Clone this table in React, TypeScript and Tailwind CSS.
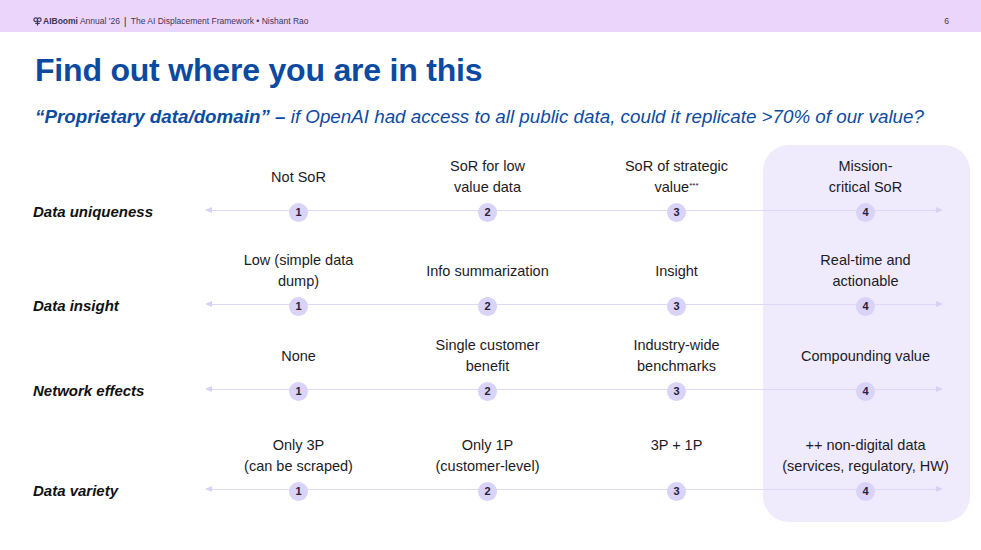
import React from "react";

type Row = {
  label: string;
  items: { text: React.ReactNode; top?: boolean }[];
  mt: string;
};

const rows: Row[] = [
  {
    label: "Data uniqueness",
    mt: "mt-[27px]",
    items: [
      { text: "Not SoR" },
      { text: <>SoR for low<br />value data</> },
      { text: <>SoR of strategic<br />value<sup className="text-[8px]">***</sup></> },
      { text: <>Mission-<br />critical SoR</> },
    ],
  },
  {
    label: "Data insight",
    mt: "mt-[31px]",
    items: [
      { text: <>Low (simple data<br />dump)</> },
      { text: "Info summarization" },
      { text: "Insight" },
      { text: <>Real-time and<br />actionable</> },
    ],
  },
  {
    label: "Network effects",
    mt: "mt-[22px]",
    items: [
      { text: "None" },
      { text: <>Single customer<br />benefit</> },
      { text: <>Industry-wide<br />benchmarks</> },
      { text: "Compounding value" },
    ],
  },
  {
    label: "Data variety",
    mt: "mt-[37px]",
    items: [
      { text: <>Only 3P<br />(can be scraped)</> },
      { text: <>Only 1P<br />(customer-level)</> },
      { text: "3P + 1P", top: true },
      { text: <>++ non-digital data<br />(services, regulatory, HW)</> },
    ],
  },
];

const Logo = () => (
  <svg width="9" height="9" viewBox="0 0 10 10" className="mr-[1px]">
    <circle cx="3" cy="3" r="2" fill="none" stroke="#3b3656" strokeWidth="1.3" />
    <circle cx="7" cy="3" r="2" fill="none" stroke="#3b3656" strokeWidth="1.3" />
    <path d="M5 4.5 V9.5 M2.5 7 H7.5" stroke="#3b3656" strokeWidth="1.3" />
  </svg>
);

export default function App() {
  return (
    <div
      className="relative w-[981px] h-[550px] overflow-hidden bg-white text-[#1c1b26]"
      style={{ fontFamily: "'Liberation Sans', Arial, sans-serif" }}
    >
      <div className="h-[32px] bg-[#ebd5fb] flex items-center pl-[33px] pr-[32px] pt-[10px] text-[8.5px] text-[#3b3656]">
        <Logo />
        <span className="font-bold">AIBoomi</span>
        <span className="ml-[2px]">Annual '26</span>
        <span className="mx-[4px] text-[11px] leading-none">|</span>
        <span>The AI Displacement Framework • Nishant Rao</span>
        <span className="ml-auto text-[8.5px]">6</span>
      </div>

      <h1 className="mt-[20px] pl-[35px] text-[32px] leading-[36px] font-bold text-[#0b4aa0] tracking-[-0.2px]">
        Find out where you are in this
      </h1>
      <p className="mt-[17px] pl-[35px] text-[18.8px] leading-[24px] italic text-[#0d4ba0]">
        <span className="font-bold">“Proprietary data/domain” –</span> if OpenAI had access to all public data, could it replicate &gt;70% of our value?
      </p>

      <div className="absolute left-[763px] top-[145px] w-[207px] h-[377px] rounded-[26px] bg-[#efebfd]" />

      <div className="relative">
        {rows.map((row) => (
          <div key={row.label} className={`${row.mt} flex flex-col`}>
            <div className="grid grid-cols-[204px_repeat(4,189px)] h-[42px]">
              <div />
              {row.items.map((it, i) => (
                <div
                  key={i}
                  className={`flex justify-center text-center text-[14.5px] leading-[21px] ${it.top ? "items-start" : "items-center"}`}
                >
                  <div>{it.text}</div>
                </div>
              ))}
            </div>
            <div className="relative mt-[3px] grid grid-cols-[204px_repeat(4,189px)] h-[18px] items-center">
              <div className="absolute left-[208px] w-[732px] top-[8.5px] h-[1px] bg-[#dcd8f6]" />
              <div className="absolute left-[205px] top-[5.5px] w-0 h-0 border-y-[3.5px] border-y-transparent border-r-[7px] border-r-[#d6d2f3]" />
              <div className="absolute left-[936px] top-[5.5px] w-0 h-0 border-y-[3.5px] border-y-transparent border-l-[7px] border-l-[#d6d2f3]" />
              <div className="pl-[33px] text-[15px] font-bold italic text-[#111]">{row.label}</div>
              {[1, 2, 3, 4].map((n) => (
                <div key={n} className="relative flex justify-center">
                  <div className="w-[19px] h-[19px] rounded-full bg-[#d8d3f7] flex items-center justify-center text-[11px] font-bold text-[#24213a]">
                    {n}
                  </div>
                </div>
              ))}
            </div>
          </div>
        ))}
      </div>
    </div>
  );
}
